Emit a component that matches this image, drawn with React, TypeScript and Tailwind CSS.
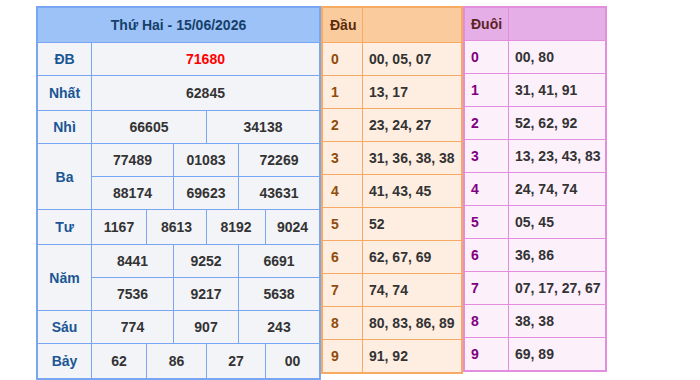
const font = { fontFamily: '"Liberation Sans", Arial, sans-serif' };

const blueCell = "flex items-center justify-center bg-[#f3f4f8] text-[#333333]";
const blueLabel = "flex items-center justify-center bg-[#f3f4f8] text-[#1a5694]";

const dau: [string, string][] = [
  ["0", "00, 05, 07"],
  ["1", "13, 17"],
  ["2", "23, 24, 27"],
  ["3", "31, 36, 38, 38"],
  ["4", "41, 43, 45"],
  ["5", "52"],
  ["6", "62, 67, 69"],
  ["7", "74, 74"],
  ["8", "80, 83, 86, 89"],
  ["9", "91, 92"],
];

const duoi: [string, string][] = [
  ["0", "00, 80"],
  ["1", "31, 41, 91"],
  ["2", "52, 62, 92"],
  ["3", "13, 23, 43, 83"],
  ["4", "24, 74, 74"],
  ["5", "05, 45"],
  ["6", "36, 86"],
  ["7", "07, 17, 27, 67"],
  ["8", "38, 38"],
  ["9", "69, 89"],
];

function ResultTable() {
  return (
    <div className="grid grid-cols-[53px_54px_26px_32px_31px_26px_53px] grid-rows-[34px_32px_34px_32px_32px_32px_34px_32px_32px_32px_34px] gap-px bg-[#78a6f2] border-2 border-[#78a6f2]">
      <div className="col-span-7 flex items-center justify-center bg-[#9cc2f8] text-[#163f6a]">
        Thứ Hai - 15/06/2026
      </div>

      <div className={blueLabel}>ĐB</div>
      <div className={`${blueCell} col-span-6 !text-[#ff0000]`}>71680</div>

      <div className={blueLabel}>Nhất</div>
      <div className={`${blueCell} col-span-6`}>62845</div>

      <div className={blueLabel}>Nhì</div>
      <div className={`${blueCell} col-span-3`}>66605</div>
      <div className={`${blueCell} col-span-3`}>34138</div>

      <div className={`${blueLabel} row-span-2`}>Ba</div>
      <div className={`${blueCell} col-span-2`}>77489</div>
      <div className={`${blueCell} col-span-2`}>01083</div>
      <div className={`${blueCell} col-span-2`}>72269</div>
      <div className={`${blueCell} col-span-2`}>88174</div>
      <div className={`${blueCell} col-span-2`}>69623</div>
      <div className={`${blueCell} col-span-2`}>43631</div>

      <div className={blueLabel}>Tư</div>
      <div className={blueCell}>1167</div>
      <div className={`${blueCell} col-span-2`}>8613</div>
      <div className={`${blueCell} col-span-2`}>8192</div>
      <div className={blueCell}>9024</div>

      <div className={`${blueLabel} row-span-2`}>Năm</div>
      <div className={`${blueCell} col-span-2`}>8441</div>
      <div className={`${blueCell} col-span-2`}>9252</div>
      <div className={`${blueCell} col-span-2`}>6691</div>
      <div className={`${blueCell} col-span-2`}>7536</div>
      <div className={`${blueCell} col-span-2`}>9217</div>
      <div className={`${blueCell} col-span-2`}>5638</div>

      <div className={blueLabel}>Sáu</div>
      <div className={`${blueCell} col-span-2`}>774</div>
      <div className={`${blueCell} col-span-2`}>907</div>
      <div className={`${blueCell} col-span-2`}>243</div>

      <div className={blueLabel}>Bảy</div>
      <div className={blueCell}>62</div>
      <div className={`${blueCell} col-span-2`}>86</div>
      <div className={`${blueCell} col-span-2`}>27</div>
      <div className={blueCell}>00</div>
    </div>
  );
}

function DauTable() {
  return (
    <div className="grid grid-cols-[39px_98px] grid-rows-[34px_repeat(10,32px)] gap-px bg-[#f6aa62] border-2 border-[#f6aa62]">
      <div className="flex items-center bg-[#f9cb9d] pl-[7px] text-[#5c2c0c]">Đầu</div>
      <div className="bg-[#f9cb9d]" />
      {dau.map(([k, v]) => (
        <div key={k} className="contents">
          <div className="flex items-center bg-[#feeee2] pl-2 text-[#8f4c0c]">{k}</div>
          <div className="flex items-center whitespace-nowrap bg-[#feeee2] pl-1.5 text-[#333333]">{v}</div>
        </div>
      ))}
    </div>
  );
}

function DuoiTable() {
  return (
    <div className="grid grid-cols-[43px_96px] grid-rows-[32px_repeat(10,32px)] gap-px bg-[#e28ddd] border-2 border-[#e28ddd]">
      <div className="flex items-center bg-[#e6aee6] pl-1.5 text-[#5c2424]">Đuôi</div>
      <div className="bg-[#e6aee6]" />
      {duoi.map(([k, v]) => (
        <div key={k} className="contents">
          <div className="flex items-center bg-[#fcf0fb] pl-1.5 text-[#800080]">{k}</div>
          <div className="flex items-center whitespace-nowrap bg-[#fcf0fb] pl-1.5 text-[#333333]">{v}</div>
        </div>
      ))}
    </div>
  );
}

export default function App() {
  return (
    <div className="w-[700px] h-[380px] overflow-hidden bg-white pl-[36px] pt-[6px] text-[14px] font-bold leading-4" style={font}>
      <div className="flex items-start">
        <ResultTable />
        <DauTable />
        <DuoiTable />
      </div>
    </div>
  );
}
